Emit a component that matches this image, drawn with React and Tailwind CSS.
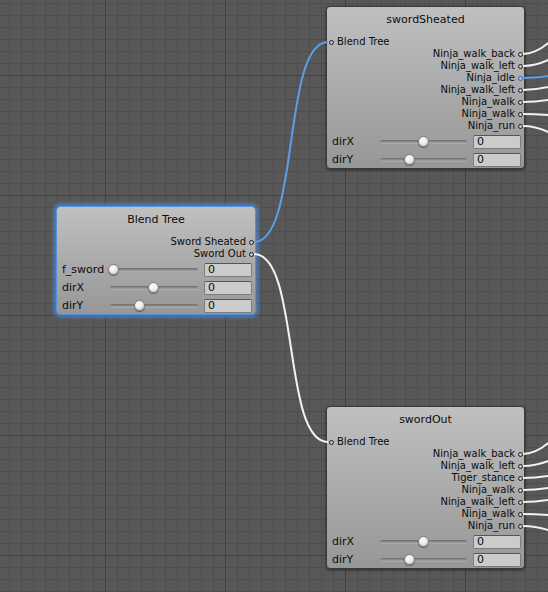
import React from 'react';

const nodes = [
  {
    id: 'blend',
    title: 'Blend Tree',
    pos: 'left-[56px] top-[206px] w-[200px]',
    selected: true,
    input: null,
    outputs: ['Sword Sheated', 'Sword Out'],
    params: [
      { label: 'f_sword', knob: 'left-[-2px]' },
      { label: 'dirX', knob: 'left-[38px]' },
      { label: 'dirY', knob: 'left-[24px]' },
    ],
  },
  {
    id: 'sheated',
    title: 'swordSheated',
    pos: 'left-[326px] top-[6px] w-[199px]',
    input: 'Blend Tree',
    outputs: ['Ninja_walk_back', 'Ninja_walk_left', 'Ninja_idle', 'Ninja_walk_left', 'Ninja_walk', 'Ninja_walk', 'Ninja_run'],
    blueOut: 2,
    params: [
      { label: 'dirX', knob: 'left-[38px]' },
      { label: 'dirY', knob: 'left-[24px]' },
    ],
  },
  {
    id: 'out',
    title: 'swordOut',
    pos: 'left-[326px] top-[406px] w-[199px]',
    input: 'Blend Tree',
    outputs: ['Ninja_walk_back', 'Ninja_walk_left', 'Tiger_stance', 'Ninja_walk', 'Ninja_walk_left', 'Ninja_walk', 'Ninja_run'],
    params: [
      { label: 'dirX', knob: 'left-[38px]' },
      { label: 'dirY', knob: 'left-[24px]' },
    ],
  },
];

// port y -> y where the wire leaves the window at x=548
const exits = [
  [54, 43], [66, 60], [78, 76, true], [90, 87], [102, 100], [114, 115], [126, 132],
  [454, 443], [466, 461], [478, 476], [490, 488], [502, 500], [514, 515], [526, 530],
];

const Port = ({ blue }) => (
  <span
    className={`inline-block shrink-0 w-[5px] h-[5px] rounded-full border ${
      blue ? 'border-[#2d5f9e] bg-[#a8c8ee]' : 'border-[#1e1e1e] bg-[#c4c4c4]'
    }`}
  />
);

const Slider = ({ knob }) => (
  <div className="relative flex-1 h-[16px] flex items-center">
    <div className="w-full h-[4px] rounded-full bg-linear-to-b from-[#6c6c6c] to-[#b4b4b4]" />
    <div
      className={`absolute top-[2px] ${knob} w-[11px] h-[11px] rounded-full border border-[#808080] bg-[radial-gradient(circle_at_40%_35%,#ffffff_0%,#ececec_45%,#b8b8b8_100%)] shadow-[0_1px_1px_rgba(0,0,0,0.35)]`}
    />
  </div>
);

const Node = ({ node }) => (
  <div
    className={`absolute ${node.pos} rounded-[4px] border bg-linear-to-b from-[#c0c0c0] to-[#979797] text-[#0c0c0c] ${
      node.selected
        ? 'border-[#4f92e4] shadow-[0_0_4px_2px_rgba(76,146,232,0.75)]'
        : 'border-[#3a3a3a] shadow-[0_1px_3px_rgba(0,0,0,0.55)]'
    }`}
  >
    <div className="h-[29px] pt-[6px] text-center text-[11px] leading-[14px]">{node.title}</div>
    <div className="flex flex-col text-[10px] leading-[12px]">
      {node.input && (
        <div className="h-[12px] flex items-center pl-[2px]">
          <Port />
          <span className="ml-[3px]">{node.input}</span>
        </div>
      )}
      {node.outputs.map((o, i) => (
        <div key={i} className="h-[12px] flex items-center justify-end pr-[1px]">
          <span className="whitespace-nowrap">{o}</span>
          <span className="ml-[3px] flex">
            <Port blue={node.blueOut === i} />
          </span>
        </div>
      ))}
    </div>
    <div className="mt-[2px] flex flex-col gap-[2px] pl-[5px] pr-[3px] text-[11px]">
      {node.params.map((p, i) => (
        <div key={i} className="h-[16px] flex items-center">
          <div className="w-[48px] whitespace-nowrap leading-[14px]">{p.label}</div>
          <Slider knob={p.knob} />
          <div className="ml-[6px] w-[48px] h-[14px] rounded-[2px] border border-[#7c7c7c] border-t-[#555] bg-[#cbcbcb] pl-[3px] leading-[12px]">
            0
          </div>
        </div>
      ))}
    </div>
  </div>
);

const App = () => {
  const exitPaths = exits.map(([y0, yE, blue]) => {
    const y2 = (yE - 0.51 * y0) / 0.49;
    return { d: `M523 ${y0} Q540 ${y0} 560 ${y2.toFixed(1)}`, blue };
  });

  return (
    <div
      className="relative w-[548px] h-[592px] overflow-hidden bg-[#585858] font-['DejaVu_Sans',sans-serif] bg-[linear-gradient(to_right,#424242_1px,transparent_1px),linear-gradient(to_bottom,#424242_1px,transparent_1px),linear-gradient(to_right,#4e4e4e_1px,transparent_1px),linear-gradient(to_bottom,#4e4e4e_1px,transparent_1px)] [background-size:120px_120px,120px_120px,12px_12px,12px_12px] [background-position:105px_75px,105px_75px,9px_3px,9px_3px]"
    >
      {nodes.map((n) => (
        <Node key={n.id} node={n} />
      ))}
      <svg className="absolute inset-0 w-[548px] h-[592px] pointer-events-none" viewBox="0 0 548 592" fill="none">
        <path d="M254 242 C300 242 282 42 328 42" stroke="#5c9eea" strokeWidth="2" />
        <path d="M254 254 C300 254 282 442 328 442" stroke="#f2f2f2" strokeWidth="2" />
        {exitPaths.map((p, i) => (
          <path key={i} d={p.d} stroke={p.blue ? '#5c9eea' : '#f2f2f2'} strokeWidth="2" />
        ))}
      </svg>
    </div>
  );
};

export default App;
